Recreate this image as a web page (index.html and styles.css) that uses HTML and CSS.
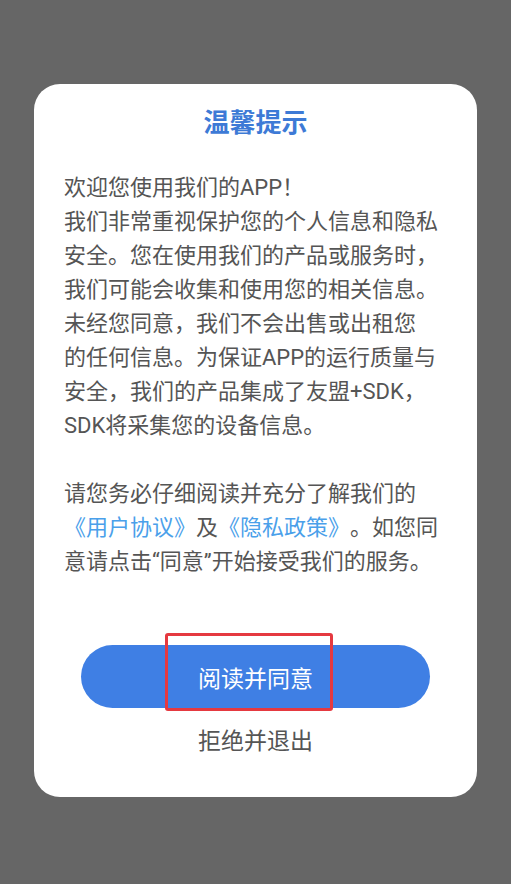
FILE: index.html
```html
<!DOCTYPE html>
<html lang="zh-CN">
<head>
<meta charset="utf-8">
<title>温馨提示</title>
<link rel="stylesheet" href="styles.css">
</head>
<body>
<div class="screen">
  <div class="dialog">
    <h1 class="title">温馨提示</h1>
    <div class="content">
      <p class="para">欢迎您使用我们的APP！<br>我们非常重视保护您的个人信息和隐私<br>安全。您在使用我们的产品或服务时，<br>我们可能会收集和使用您的相关信息。<br>未经您同意，我们不会出售或出租您<br>的任何信息。为保证APP的运行质量与<br>安全，我们的产品集成了友盟+SDK，<br>SDK将采集您的设备信息。</p>
      <p class="para gap">请您务必仔细阅读并充分了解我们的<br><a class="link">《用户协议》</a>及<a class="link">《隐私政策》</a>。如您同<br>意请点击“同意”开始接受我们的服务。</p>
    </div>
    <div class="actions">
      <div class="agree-wrap">
        <button class="agree">阅读并同意</button>
        <span class="highlight"></span>
      </div>
      <button class="reject">拒绝并退出</button>
    </div>
  </div>
</div>
</body>
</html>
```
FILE: styles.css
```css
html, body {
  margin: 0;
  padding: 0;
  background: #666666;
}
.screen {
  width: 511px;
  height: 884px;
  padding-top: 84px;
  box-sizing: border-box;
  display: flex;
  justify-content: center;
  align-items: flex-start;
  font-family: "Roboto", "Noto Sans CJK SC", sans-serif;
  text-spacing-trim: space-all;
}
.dialog {
  width: 443px;
  background: #ffffff;
  border-radius: 26px;
  padding: 22px 30px 38px;
  box-sizing: border-box;
  display: flex;
  flex-direction: column;
}
.title {
  margin: 0;
  text-align: center;
  font-size: 26px;
  line-height: 34px;
  font-weight: 700;
  color: #3d7ad6;
}
.content {
  margin-top: 31px;
}
.para {
  margin: 0;
  font-size: 22px;
  line-height: 34px;
  color: #555555;
  white-space: nowrap;
  text-spacing-trim: space-all;
}
.gap {
  margin-top: 34px;
}
.link {
  color: #4aa0ea;
  text-decoration: none;
}
.actions {
  margin-top: 66px;
  display: flex;
  flex-direction: column;
  align-items: center;
}
.agree-wrap {
  position: relative;
  width: 349px;
}
.agree {
  display: block;
  width: 100%;
  height: 63px;
  border: none;
  border-radius: 32px;
  background: #3f7fe4;
  color: #ffffff;
  font-family: "Roboto", "Noto Sans CJK SC", sans-serif;
  font-size: 23px;
  padding: 0;
}
.highlight {
  position: absolute;
  left: 84px;
  top: -12px;
  width: 168px;
  height: 78px;
  border: 3px solid #e53940;
  border-radius: 3px;
  box-sizing: border-box;
  pointer-events: none;
}
.reject {
  margin-top: 17px;
  border: none;
  background: none;
  padding: 0;
  font-family: "Roboto", "Noto Sans CJK SC", sans-serif;
  font-size: 23px;
  line-height: 34px;
  color: #555555;
}
```
